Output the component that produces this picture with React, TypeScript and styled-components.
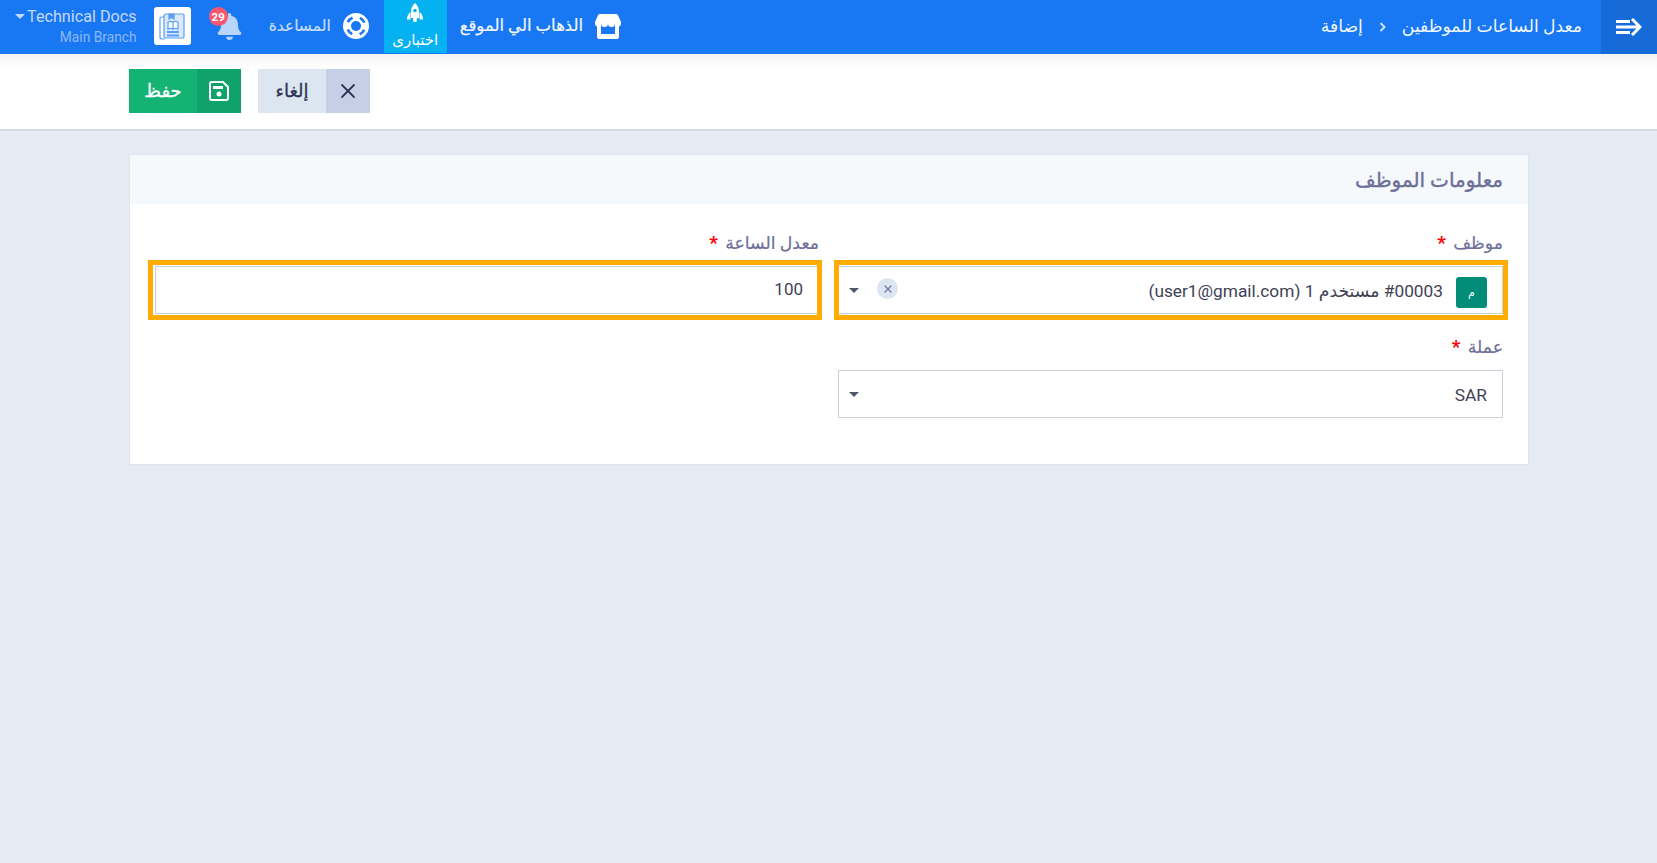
import React from 'react';
import styled, { createGlobalStyle } from 'styled-components';
import { X } from 'lucide-react';
import { FaBell } from 'react-icons/fa';

const GlobalStyle = createGlobalStyle`
  html, body {
    margin: 0;
    padding: 0;
    height: 100%;
    background: #e4ebf3;
    font-family: Roboto, "Noto Sans", "DejaVu Sans", sans-serif;
  }
  * {
    box-sizing: border-box;
  }
`;

const Page = styled.div`
  direction: rtl;
  min-height: 863px;
  background: #e4ebf3;
`;

const TopBar = styled.header`
  display: flex;
  align-items: stretch;
  height: 54px;
  background: #1877f2;
  color: #fff;
`;

const Toggler = styled.button`
  display: flex;
  align-items: center;
  justify-content: center;
  width: 56px;
  padding: 0;
  border: 0;
  background: #176bd9;
  color: #fff;
`;

const Breadcrumb = styled.nav`
  display: flex;
  align-items: center;
  gap: 16px;
  padding: 0 19px;
  font-size: 17.2px;
  color: #f2f7ff;
`;

const Crumb = styled.span`
  padding-bottom: 2px;
`;

const Actions = styled.div`
  display: flex;
  align-items: stretch;
  margin-right: auto;
  padding-left: 15px;
`;

const NavLink = styled.a<{ $muted?: boolean }>`
  display: flex;
  align-items: center;
  gap: 12px;
  padding: 0 15px 0 13px;
  font-size: ${({ $muted }) => ($muted ? '15.5px' : '16.5px')};
  color: ${({ $muted }) => ($muted ? '#c9defc' : '#f2f7ff')};
  -webkit-text-stroke: 0.2px currentColor;

  svg {
    margin-bottom: 2px;
  }

  span {
    padding-bottom: ${({ $muted }) => ($muted ? '2px' : '4px')};
  }
`;

const TestLink = styled.a`
  display: flex;
  flex-direction: column;
  align-items: center;
  width: 63px;
  height: 53px;
  padding-top: 3px;
  background: #04b1f1;
  font-size: 15px;
  color: #fff;

  span {
    margin-top: 9px;
  }
`;

const BellWrap = styled.div`
  position: relative;
  display: flex;
  align-items: center;
  width: 65px;
  padding: 0 13px 2px 0;
  color: #b9d5fb;
`;

const Badge = styled.span`
  position: absolute;
  top: 7px;
  left: 18px;
  display: flex;
  align-items: center;
  justify-content: center;
  width: 19px;
  height: 19px;
  border-radius: 50%;
  background: #f9566f;
  font-size: 11.5px;
  font-weight: 700;
  color: #fff;
`;

const LogoBox = styled.div`
  display: flex;
  align-items: center;
  justify-content: center;
  align-self: center;
  width: 37px;
  height: 38px;
  margin-bottom: 2px;
  margin-left: 17px;
  border-radius: 3px;
  background: #fff;
`;

const Account = styled.div`
  display: flex;
  flex-direction: column;
  align-items: flex-start;
  direction: ltr;
  padding-top: 6px;
  text-align: right;
`;

const AccountName = styled.div`
  display: flex;
  align-items: center;
  gap: 2px;
  height: 20px;
  font-size: 16.2px;
  color: #c5d9f9;
`;

const Caret = styled.i<{ $color?: string }>`
  display: block;
  width: 0;
  height: 0;
  border-style: solid;
  border-width: 5px 5px 0;
  border-color: ${({ $color }) => $color || '#c5d9f9'} transparent transparent;
`;

const AccountBranch = styled.div`
  align-self: flex-end;
  margin-top: 3px;
  font-size: 13.8px;
  color: #8db9f7;
`;

const SubHeader = styled.div`
  display: flex;
  justify-content: flex-end;
  gap: 17px;
  height: 77px;
  padding: 15px 0 0 129px;
  background: #fff;
  border-bottom: 2px solid #d5dbe5;
  box-shadow: inset 0 14px 14px -10px rgba(0, 0, 0, 0.07);
`;

const ActionButton = styled.button<{ $bg: string; $iconBg: string; $color: string; $width: number }>`
  display: flex;
  align-items: stretch;
  width: ${({ $width }) => $width}px;
  height: 44px;
  padding: 0;
  border: 0;
  background: ${({ $bg }) => $bg};
  color: ${({ $color }) => $color};
  font-family: inherit;
  font-size: 18px;
  -webkit-text-stroke: 0.3px currentColor;

  > span:first-child {
    display: flex;
    align-items: center;
    justify-content: center;
    width: 44px;
    background: ${({ $iconBg }) => $iconBg};
    -webkit-text-stroke: 0;
  }

  > span:last-child {
    flex: 1;
    display: flex;
    align-items: center;
    justify-content: center;
    padding-bottom: 2px;
  }
`;

const Content = styled.main`
  padding: 23px 128px 0 129px;
`;

const Card = styled.section`
  height: 311px;
  background: #fff;
  border: 1px solid #dfe5ec;
`;

const CardHead = styled.h2`
  display: flex;
  align-items: center;
  height: 49px;
  margin: 0;
  padding: 0 25px;
  background: #f6f9fc;
  font-size: 20px;
  font-weight: 400;
  color: #6e7099;
  -webkit-text-stroke: 0.4px currentColor;
`;

const FormGrid = styled.div`
  display: grid;
  grid-template-columns: 665px 664px;
  column-gap: 19px;
  row-gap: 21px;
  padding: 27px 25px 0;
`;

const Field = styled.div`
  display: flex;
  flex-direction: column;
`;

const Label = styled.label`
  height: 35px;
  padding-top: 2px;
  font-size: 17.3px;
  color: #6e7099;
  -webkit-text-stroke: 0.2px currentColor;

  b {
    margin-right: 3px;
    font-size: 19px;
    line-height: 17px;
    font-weight: 700;
    color: #f00;
    -webkit-text-stroke: 0;
  }
`;

const Control = styled.div`
  position: relative;
  display: flex;
  align-items: center;
  height: 48px;
  padding: 0 15px 0 10px;
  background: #fff;
  border: 1px solid #cdd0d8;
  font-size: 17px;
  color: #3f4254;
`;

// hand-drawn highlight of the screenshot, sits over the field
const Highlight = styled.span<{ $left: number; $right: number }>`
  position: absolute;
  top: -7px;
  bottom: -7px;
  left: ${({ $left }) => $left}px;
  right: ${({ $right }) => $right}px;
  border: 5px solid #ffab00;
  pointer-events: none;
`;

const Tag = styled.span`
  display: flex;
  align-items: center;
  justify-content: center;
  width: 31px;
  height: 31px;
  margin-top: 4px;
  margin-left: 13px;
  border-radius: 3px;
  background: #008c77;
  font-size: 11px;
  color: #fff;
`;

const ControlText = styled.span<{ $size?: number }>`
  flex: 1;
  padding-top: 1px;
  font-size: ${({ $size }) => $size || 17}px;
`;

const RateValue = styled.span`
  padding-bottom: 3px;
`;

const ClearButton = styled.span`
  display: flex;
  align-items: center;
  justify-content: center;
  width: 21px;
  height: 21px;
  margin-bottom: 3px;
  margin-left: 18px;
  border-radius: 50%;
  background: #dce6f3;
  color: #6e7a9a;
`;

const ArrowIcon = () => (
  <svg width="26" height="18" viewBox="0 0 26 18" fill="none" stroke="#fff" strokeWidth="3">
    <path d="M0 3.500h14M0 9h22M0 14.500h14M16 1l8 8-8 8" />
  </svg>
);

const Chevron = () => (
  <svg width="7" height="10" viewBox="0 0 7 10" fill="none" stroke="#cfe1fc" strokeWidth="2">
    <path d="M1.500 1l4 4-4 4" />
  </svg>
);

const StoreIcon = () => (
  <svg width="26" height="25" viewBox="0 0 26 25" fill="#fff">
    <path
      fillRule="evenodd"
      d="M2 9h22v14a2 2 0 0 1-2 2H4a2 2 0 0 1-2-2zm4 1v10h14V10z"
    />
    <path d="M5 0h16c1 0 1.600.400 2 1.200L26 8v1.500a3 3 0 0 1-6 0 3.500 3.500 0 0 1-7 0 3.500 3.500 0 0 1-7 0 3 3 0 0 1-6 0V8l3-6.800C3.400.400 4 0 5 0z" />
  </svg>
);

const LifebuoyIcon = () => (
  <svg width="26" height="26" viewBox="0 0 26 26">
    <circle cx="13" cy="13" r="13" fill="#fff" />
    <circle cx="13" cy="13" r="5" fill="#1877f2" />
    <circle
      cx="13"
      cy="13"
      r="9"
      fill="none"
      stroke="#1877f2"
      strokeWidth="2.600"
      strokeDasharray="6.500 7.640"
      strokeDashoffset="-3.820"
    />
  </svg>
);

const RocketIcon = () => (
  <svg width="16" height="19" viewBox="0 0 16 19" fill="#fff">
    <path d="M8 0c2.800 2.500 4 5.500 4 9v6H4V9c0-3.500 1.200-6.500 4-9z" />
    <path d="M3.500 9v7.500H0c0-3 1.200-5.800 3.500-7.500zM12.500 9v7.500H16c0-3-1.200-5.800-3.500-7.500zM6 15h4l-.5 4h-3z" />
    <circle cx="8" cy="7.500" r="1.800" fill="#04b1f1" />
  </svg>
);

const DocsLogo = () => (
  <svg width="26" height="27" viewBox="0 0 26 27" fill="none" stroke="#5a9ff7" strokeWidth="1.200">
    <path d="M5 4H2.500A1.500 1.500 0 0 0 1 5.500V24a2 2 0 0 0 2 2h3" />
    <path d="M7 1h17a1 1 0 0 1 1 1v22a1 1 0 0 1-1 1H7a2 2 0 0 1-2-2V3a2 2 0 0 1 2-2z" fill="#dbe9fc" />
    <path d="M9 9c2-1 3-1 5 0v7c-2-1-3-1-5 0zM14 9c2-1 3-1 5 0v7c-2-1-3-1-5 0z" fill="#fff" />
    <path d="M8 19h12M8 22.500h12" strokeWidth="1.800" />
    <path d="M10 1h5v5l-2.500-1.500L10 6z" fill="#5a9ff7" />
  </svg>
);

const SaveIcon = () => (
  <svg width="20" height="20" viewBox="0 0 20 20" fill="none" stroke="#fff" strokeWidth="2">
    <path d="M3 1h11l5 5v11a2 2 0 0 1-2 2H3a2 2 0 0 1-2-2V3a2 2 0 0 1 2-2z" />
    <path d="M4 6.500h10" strokeWidth="3" />
    <circle cx="10" cy="13" r="2.500" fill="#fff" stroke="none" />
  </svg>
);

export default function App() {
  return (
    <Page>
      <GlobalStyle />
      <TopBar>
        <Toggler>
          <ArrowIcon />
        </Toggler>
        <Breadcrumb>
          <Crumb>معدل الساعات للموظفين</Crumb>
          <Chevron />
          <Crumb>إضافة</Crumb>
        </Breadcrumb>
        <Actions>
          <NavLink>
            <StoreIcon />
            <span>الذهاب الي الموقع</span>
          </NavLink>
          <TestLink>
            <RocketIcon />
            <span>اختبارى</span>
          </TestLink>
          <NavLink $muted>
            <LifebuoyIcon />
            <span>المساعدة</span>
          </NavLink>
          <BellWrap>
            <FaBell size={27} />
            <Badge>29</Badge>
          </BellWrap>
          <LogoBox>
            <DocsLogo />
          </LogoBox>
          <Account>
            <AccountName>
              <Caret />
              Technical Docs
            </AccountName>
            <AccountBranch>Main Branch</AccountBranch>
          </Account>
        </Actions>
      </TopBar>
      <SubHeader>
        <ActionButton $bg="#dce6f1" $iconBg="#c5d0e6" $color="#2f3352" $width={112}>
          <span>
            <X size={24} strokeWidth={1.8} />
          </span>
          <span>إلغاء</span>
        </ActionButton>
        <ActionButton $bg="#14b373" $iconBg="#10a26b" $color="#fff" $width={112}>
          <span>
            <SaveIcon />
          </span>
          <span>حفظ</span>
        </ActionButton>
      </SubHeader>
      <Content>
        <Card>
          <CardHead>معلومات الموظف</CardHead>
          <FormGrid>
            <Field>
              <Label>
                موظف <b>*</b>
              </Label>
              <Control>
                <Highlight $left={-5} $right={-6} />
                <Tag>م</Tag>
                <ControlText $size={17.3}>#00003 مستخدم 1 (user1@gmail.com)</ControlText>
                <ClearButton>
                  <X size={12} strokeWidth={2.4} />
                </ClearButton>
                <Caret $color="#4c5868" />
              </Control>
            </Field>
            <Field>
              <Label>
                معدل الساعة <b>*</b>
              </Label>
              <Control>
                <Highlight $left={-8} $right={-4} />
                <RateValue>100</RateValue>
              </Control>
            </Field>
            <Field>
              <Label>
                عملة <b>*</b>
              </Label>
              <Control>
                <ControlText $size={17.3}>SAR</ControlText>
                <Caret $color="#4c5868" />
              </Control>
            </Field>
          </FormGrid>
        </Card>
      </Content>
    </Page>
  );
}
